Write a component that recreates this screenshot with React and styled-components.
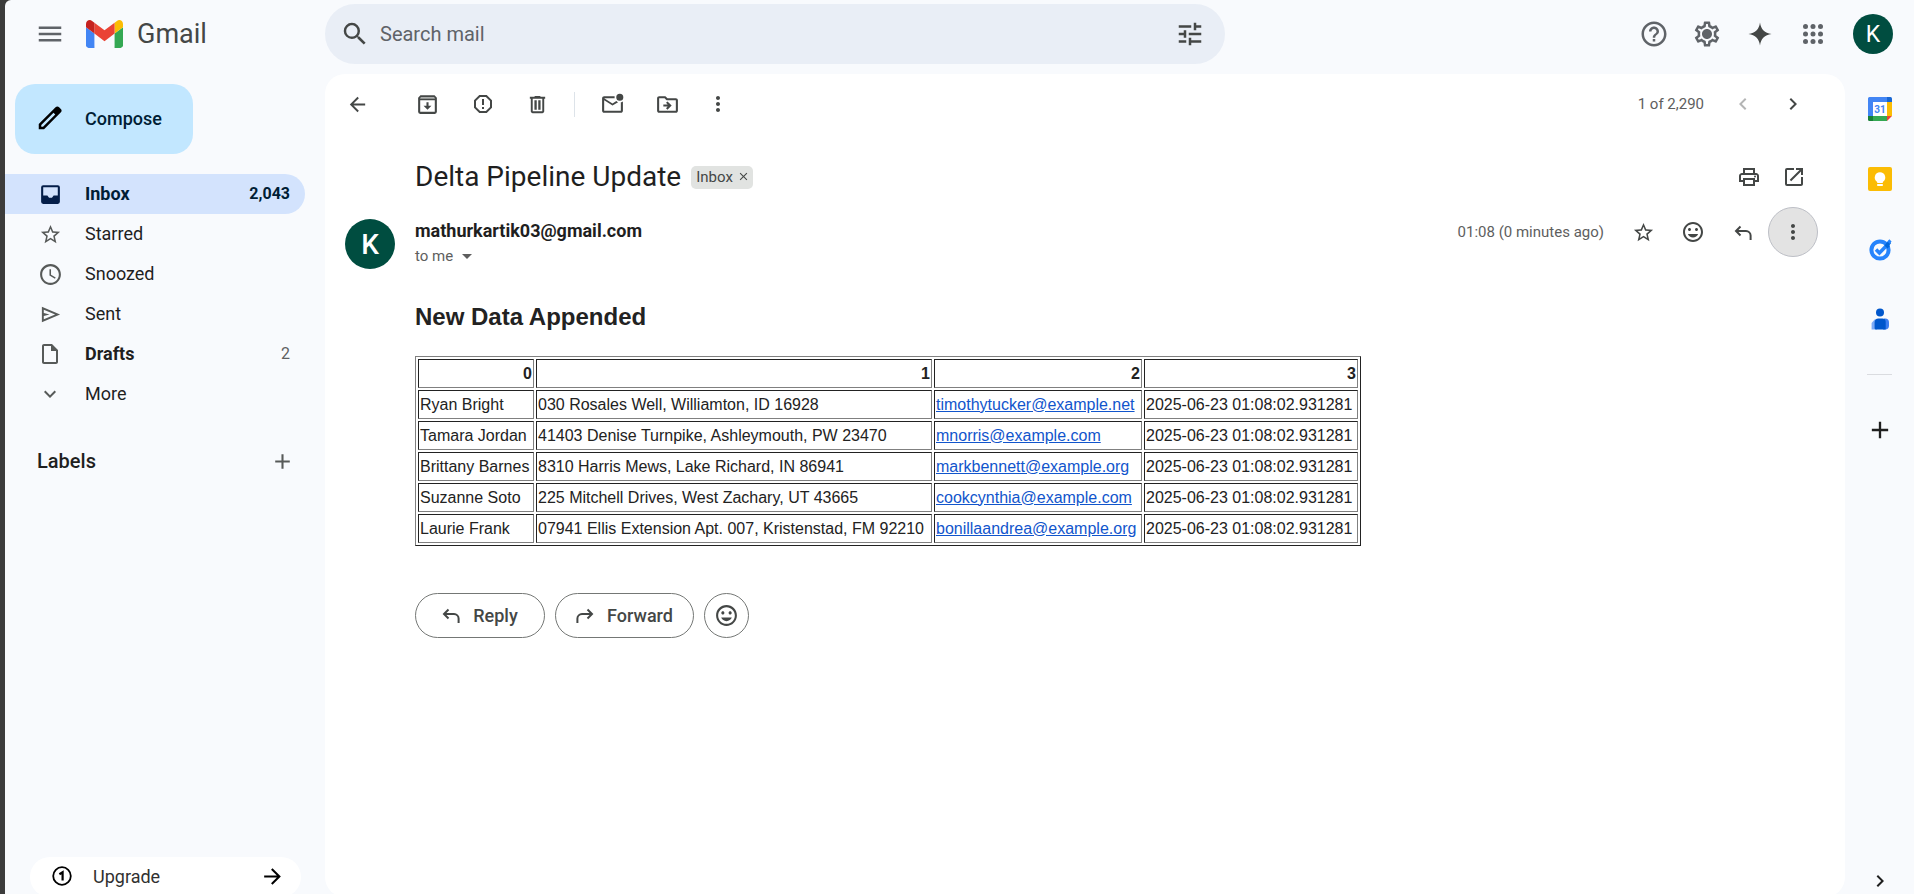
import React from "react";
import styled, { createGlobalStyle, css } from "styled-components";
import {
  MdMenu, MdSearch, MdTune, MdHelpOutline, MdOutlineSettings, MdStarBorder, MdSchedule,
  MdOutlineInsertDriveFile, MdExpandMore, MdAdd, MdArrowForward, MdArrowBack,
  MdReportGmailerrorred, MdOutlineDriveFileMove, MdMoreVert, MdChevronLeft, MdChevronRight,
  MdOutlinePrint, MdOpenInNew, MdMood, MdClose, MdArrowDropDown,
} from "react-icons/md";

const GlobalStyle = createGlobalStyle`
  *, *::before, *::after { box-sizing: border-box; }
  html, body { margin: 0; height: 100%; overflow: hidden; }
  body {
    background: #3c3c3c;
    color: #1f1f1f;
    font-family: Roboto, "Liberation Sans", sans-serif;
    font-size: 17px;
  }
  button, input { font: inherit; color: inherit; }
  svg { display: block; flex: none; }
`;

/* ---------- icons ---------- */

const Svg = styled.svg.attrs((p) => ({
  width: p.$w,
  height: p.$h || p.$w,
  "aria-hidden": true,
  fill: "currentColor",
}))``;

const GmailLogo = () => (
  <Svg $w={37} $h={28} viewBox="52 42 88 66">
    <path fill="#4285f4" d="M58 108h14V74L52 59v43c0 3.32 2.69 6 6 6" />
    <path fill="#34a853" d="M120 108h14c3.32 0 6-2.69 6-6V59l-20 15" />
    <path fill="#fbbc04" d="M120 48v26l20-15v-8c0-7.42-8.47-11.65-14.4-7.2" />
    <path fill="#ea4335" d="M72 74V48l24 18 24-18v26L96 92" />
    <path fill="#c5221f" d="M52 51v8l20 15V48l-5.6-4.2c-5.94-4.45-14.4-.22-14.4 7.2" />
  </Svg>
);

const PencilIcon = () => (
  <Svg $w={30} viewBox="0 0 24 24">
    <path
      fillRule="evenodd"
      d="M3 21v-4.25L16.45 3.3q.575-.575 1.413-.575t1.412.575l1.4 1.4q.575.575.6 1.388t-.55 1.387L7.25 21H3zM5 19h1.4L16.2 9.2l-1.4-1.4L5 17.6V19z"
    />
  </Svg>
);

const InboxIcon = () => (
  <Svg $w={25} viewBox="0 0 24 24">
    <path
      fillRule="evenodd"
      d="M5 3h14a2 2 0 0 1 2 2v14a2 2 0 0 1-2 2H5a2 2 0 0 1-2-2V5a2 2 0 0 1 2-2zm0 2v8h4l1.6 2.2h2.8L15 13h4V5H5z"
    />
  </Svg>
);

const SendIcon = () => (
  <Svg $w={23} viewBox="0 0 24 24">
    <path d="M3 20V4l19 8-19 8Zm2-3 11.85-5L5 7v3.5l6 1.5-6 1.5V17Z" />
  </Svg>
);

const OneIcon = () => (
  <Svg $w={20} viewBox="0 0 20 20">
    <circle cx="10" cy="10" r="8.8" fill="none" stroke="currentColor" strokeWidth="1.8" />
    <path d="M7.4 8.2 10.6 6.2V14.4" fill="none" stroke="currentColor" strokeWidth="2.2" />
  </Svg>
);

const GearIcon = () => (
  <Svg $w={30} viewBox="0 0 24 24">
    <MdOutlineSettings size={24} />
    <circle cx="12" cy="12" r="3.4" />
  </Svg>
);

const SparkIcon = () => (
  <Svg $w={24} viewBox="0 0 24 24">
    <path d="M12 .5C12.9 7.3 16.7 11.1 23.5 12 16.7 12.9 12.9 16.7 12 23.5 11.1 16.7 7.3 12.9 .5 12 7.3 11.1 11.1 7.3 12 .5z" />
  </Svg>
);

const AppsIcon = () => (
  <Svg $w={20} viewBox="0 0 20 20">
    {[2.5, 10, 17.5].map((y) =>
      [2.5, 10, 17.5].map((x) => <circle key={`${x}-${y}`} cx={x} cy={y} r="2.5" />)
    )}
  </Svg>
);

const ArchiveIcon = () => (
  <Svg $w={25} viewBox="0 0 24 24">
    <path
      fillRule="evenodd"
      d="M5.2 3h13.6L21 5.6V19a2 2 0 0 1-2 2H5a2 2 0 0 1-2-2V5.6L5.2 3zM5 8v11h14V8H5z"
    />
    <path d="M5.6 4.8h12.8l.8 1.6H4.8z" fill="#aaacab" />
    <path d="M11 9.8h2v3.4h2.8L12 17l-3.8-3.8H11z" />
  </Svg>
);

const TrashIcon = () => (
  <Svg $w={23} viewBox="0 0 24 24">
    <path
      fillRule="evenodd"
      d="M7 21q-.825 0-1.412-.587Q5 19.825 5 19V6H4V4h5V3h6v1h5v2h-1v13q0 .825-.587 1.413Q17.825 21 17 21ZM17 6H7v13h10ZM8.8 17.4h2.4V7.6H8.8Zm4 0h2.4V7.6h-2.4Z"
    />
  </Svg>
);

const UnreadIcon = () => (
  <Svg $w={25} viewBox="0 0 24 24">
    <path d="M4 20q-.825 0-1.412-.587Q2 18.825 2 18V6q0-.825.588-1.412Q3.175 4 4 4h10.1q-.1.5-.1 1t.1 1H4l8 5 3.65-2.275q.375.35.813.6.437.25.937.425L12 13 4 8v10h16V9.9q.575-.125 1.075-.35.5-.225.925-.55v9q0 .825-.587 1.413Q20.825 20 20 20ZM19 8.4a3.4 3.4 0 1 1 0-6.8 3.4 3.4 0 0 1 0 6.8Z" />
  </Svg>
);

const arrowPath = "M6.5 1.5 2 6l4.5 4.5M2.4 6H12a4.6 4.6 0 0 1 4.6 4.6V15";

const ReplyIcon = () => (
  <Svg $w={18} $h={15} viewBox="0 0 18 15">
    <path d={arrowPath} fill="none" stroke="currentColor" strokeWidth="2" />
  </Svg>
);

const ForwardIcon = () => (
  <Svg $w={18} $h={15} viewBox="0 0 18 15">
    <g transform="matrix(-1 0 0 1 18 0)">
      <path d={arrowPath} fill="none" stroke="currentColor" strokeWidth="2" />
    </g>
  </Svg>
);

const CalendarIcon = () => (
  <Svg $w={24} viewBox="0 0 24 24">
    <path fill="#4285f4" d="M1.5 0H19v5H5v14H0V1.5A1.5 1.5 0 0 1 1.5 0z" />
    <path fill="#1967d2" d="M19 0h3.5A1.5 1.5 0 0 1 24 1.5V5h-5z" />
    <path fill="#fbbc04" d="M19 5h5v14h-5z" />
    <path fill="#34a853" d="M5 19h14v5H5z" />
    <path fill="#188038" d="M0 19h5v5H1.5A1.5 1.5 0 0 1 0 22.5z" />
    <path fill="#ea4335" d="M19 19h5l-5 5z" />
    <path fill="#fff" d="M5 5h14v14H5z" />
    <text x="12" y="16" textAnchor="middle" fill="#4285f4" fontSize="10" fontWeight="700">31</text>
  </Svg>
);

const KeepIcon = () => (
  <Svg $w={24} viewBox="0 0 24 24">
    <rect width="24" height="24" rx="2" fill="#fbbc04" />
    <path fill="#fff" d="M12 5.3a5.2 5.2 0 0 1 2.8 9.6v1H9.2v-1A5.2 5.2 0 0 1 12 5.3zM9.2 17h5.6v1.9H9.2z" />
  </Svg>
);

const TasksIcon = () => (
  <Svg $w={24} viewBox="0 0 24 24">
    <circle cx="12" cy="13" r="8.6" fill="none" stroke="#2684fc" strokeWidth="4" />
    <path d="M8 12.6l3.4 3.4 7-7.2" fill="none" stroke="#2684fc" strokeWidth="3.6" />
    <path d="M16.4 8.4l3.2 3.2 2.2-2.5-3-3z" fill="#0066da" />
    <path d="M17.6 7.2l2.9-3.6 2.6 2.4-2.6 3.4z" fill="#0066da" />
    <path d="M19.4 4.6 21.3 2.3 23.6 4.6 21.6 6.8z" fill="#2684fc" />
  </Svg>
);

const ContactsIcon = () => (
  <Svg $w={24} viewBox="0 0 24 24">
    <circle cx="12" cy="5.6" r="4" fill="#0057cc" />
    <path fill="#7baaf7" d="M6.6 12.4H9v10H3.6V16z" />
    <path fill="#3d7ff0" d="M16 11.4h1a4 4 0 0 1 4 4v3.2a4 4 0 0 1-4 4h-2z" />
    <path fill="#0057cc" d="M10.5 11.4h3.8a3.4 3.4 0 0 1 3.4 3.4v7.8H8a1.4 1.4 0 0 1-1.4-1.4v-6a3.9 3.9 0 0 1 3.9-3.8z" />
  </Svg>
);

/* ---------- page frame ---------- */

const Shell = styled.div`
  display: flex;
  flex-direction: column;
  height: calc(100vh + 3px);
  margin-left: 5px;
  background: #f8fafd;
  border-top-left-radius: 6px;
`;

const Header = styled.header`
  display: flex;
  flex: none;
  height: 74px;
  padding: 4px 21px 10px 0;
`;

const Body = styled.div`
  display: flex;
  flex: 1;
  min-height: 0;
`;

const IconButton = styled.button`
  display: flex;
  align-items: center;
  justify-content: center;
  flex: none;
  width: ${(p) => p.$w || 50}px;
  height: 50px;
  padding: 0;
  border: 1px solid ${(p) => (p.$active ? "#bdbfc6" : "transparent")};
  border-radius: 50%;
  background: ${(p) => (p.$active ? "#e3e3e3" : "none")};
  color: ${(p) => p.$color || "#444746"};
`;

const Avatar = styled.span`
  display: flex;
  align-items: center;
  justify-content: center;
  flex: none;
  width: ${(p) => p.$size}px;
  height: ${(p) => p.$size}px;
  border-radius: 50%;
  background: #004d40;
  color: #fff;
  font-size: ${(p) => (p.$size > 40 ? 28 : 23)}px;
  font-weight: ${(p) => (p.$size > 40 ? 500 : 400)};
`;

const AccountButton = styled.button`
  padding: 0;
  margin-left: 12px;
  border: 0;
  background: none;
  border-radius: 50%;
`;

/* ---------- header ---------- */

const Brand = styled.div`
  display: flex;
  align-items: center;
  flex: none;
  width: 320px;
  padding-left: 20px;
`;

const BrandLink = styled.a`
  display: flex;
  align-items: center;
  gap: 14px;
  margin-left: 11px;
  color: #444746;
  font-size: 27px;
  text-decoration: none;
`;

const SearchBar = styled.form`
  display: flex;
  align-items: center;
  flex: 0 1 900px;
  padding: 0 10px 0 5px;
  border-radius: 30px;
  background: #e9eef6;
`;

const SearchInput = styled.input`
  flex: 1;
  min-width: 0;
  padding: 0;
  border: 0;
  outline: 0;
  background: none;
  font-size: 20px;
  &::placeholder { color: #5f6368; opacity: 1; }
`;

const HeaderTools = styled.div`
  display: flex;
  align-items: center;
  gap: 3px;
  margin-left: auto;
`;

/* ---------- sidebar ---------- */

const Sidebar = styled.nav`
  display: flex;
  flex-direction: column;
  align-items: flex-start;
  flex: none;
  width: 320px;
  padding-right: 20px;
`;

const ComposeButton = styled.button`
  display: flex;
  align-items: center;
  gap: 20px;
  height: 70px;
  margin: 10px 0 20px 10px;
  padding: 0 31px 2px 20px;
  border: 0;
  border-radius: 20px;
  background: #c2e7ff;
  color: #001d35;
  font-size: 18px;
  font-weight: 500;
  svg { color: #000; }
`;

const FolderList = styled.ul`
  width: 100%;
  margin: 0;
  padding: 0;
  list-style: none;
`;

const FolderLink = styled.a`
  display: flex;
  align-items: center;
  height: 40px;
  padding: 0 15px 2px 0;
  border-radius: 0 20px 20px 0;
  color: #1f1f1f;
  font-size: 18px;
  text-decoration: none;
  ${(p) => p.$bold && css`font-weight: 700;`}
  ${(p) => p.$selected && css`background: #d3e3fd; color: #001d35; font-weight: 700;`}
`;

const FolderIcon = styled.span`
  display: flex;
  justify-content: center;
  width: 50px;
  margin: 0 10px 0 20px;
  padding-top: 2px;
  color: ${(p) => (p.$selected ? "#041e49" : "#575a59")};
`;

const FolderCount = styled.span`
  margin-left: auto;
  color: ${(p) => (p.$selected ? "#001d35" : "#5e5f61")};
  font-size: 16px;
  font-weight: ${(p) => (p.$selected ? 700 : 400)};
`;

const LabelsHead = styled.div`
  display: flex;
  align-items: center;
  justify-content: space-between;
  width: 100%;
  margin-top: 22px;
  padding: 0 0 0 32px;
  svg { color: #575a59; }
`;

const LabelsTitle = styled.h2`
  margin: 0;
  font-size: 20px;
  font-weight: 500;
`;

const UpgradeLink = styled.a`
  display: flex;
  align-items: center;
  gap: 21px;
  width: 271px;
  height: 40px;
  margin: auto 0 0 25px;
  padding: 0 16px 2px 22px;
  border-radius: 20px;
  background: #fff;
  color: #303030;
  font-size: 18px;
  text-decoration: none;
  svg { color: #000; }
  svg:last-child { margin-left: auto; }
`;

/* ---------- message ---------- */

const Panel = styled.main`
  flex: 1;
  min-width: 0;
  border-radius: 20px;
  background: #fff;
`;

const Toolbar = styled.div`
  display: flex;
  align-items: center;
  height: 62px;
  padding: 0 27px 2px 5px;
`;

const ToolGroup = styled.div`
  display: flex;
  align-items: center;
  margin-left: ${(p) => p.$gap || 0}px;
`;

const Divider = styled.span`
  width: 1px;
  height: 25px;
  margin: 0 10px 0 9px;
  background: #dde3e9;
`;

const Pager = styled.div`
  display: flex;
  align-items: center;
  margin-left: auto;
  color: #5e5e5e;
  font-size: 15px;
`;

const PagerText = styled.span`
  margin-right: 14px;
`;

const SubjectRow = styled.div`
  display: flex;
  align-items: center;
  height: 50px;
  margin: 16px 0 5px;
  padding: 0 29px 0 90px;
`;

const Subject = styled.h1`
  margin: 0 10px 0 0;
  font-size: 28px;
  font-weight: 400;
  line-height: 36px;
`;

const Chip = styled.button`
  display: flex;
  align-items: center;
  gap: 4px;
  height: 23px;
  padding: 0 3px 1px 5px;
  border: 0;
  border-radius: 5px;
  background: #e1e3e1;
  color: #444746;
  font-size: 15px;
`;

const SubjectTools = styled.div`
  display: flex;
  margin-left: auto;
`;

const MessageHead = styled.div`
  display: flex;
  align-items: flex-start;
  gap: 20px;
  padding: 0 27px 0 20px;
`;

const AvatarSlot = styled.div`
  padding-top: 12px;
`;

const SenderBlock = styled.div`
  padding-top: 12px;
`;

const SenderName = styled.h3`
  margin: 0;
  font-size: 18px;
  font-weight: 700;
  line-height: 24px;
`;

const Recipient = styled.button`
  display: flex;
  align-items: center;
  gap: 2px;
  height: 26px;
  padding: 0;
  border: 0;
  background: none;
  color: #5e5e5e;
  font-size: 15px;
`;

const MessageMeta = styled.div`
  display: flex;
  align-items: center;
  margin-left: auto;
  color: #5e5e5e;
  font-size: 15px;
`;

const MessageTime = styled.time`
  margin-right: 14px;
`;

const Content = styled.article`
  padding: 34px 90px 0;
  color: #222;
  font-family: "Liberation Sans", Arial, sans-serif;
  font-size: 16px;
`;

const ContentTitle = styled.h2`
  margin: 0 0 25px;
  font-size: 24px;
  font-weight: 700;
  line-height: 28px;
`;

const DataTable = styled.table`
  table-layout: fixed;
  width: 946px;
  border: 1px solid;
  border-color: #808080 #222 #222 #808080;
  border-collapse: separate;
  border-spacing: 2px;
  th, td {
    height: 29px;
    padding: 1px;
    border: 1px solid;
    border-color: #222 #808080 #808080 #222;
    white-space: nowrap;
  }
  th { text-align: right; }
  a { color: #1155cc; }
`;

const Column = styled.col`
  width: ${(p) => p.$w}px;
`;

const Actions = styled.div`
  display: flex;
  gap: 10px;
  margin: 47px 0 0 90px;
`;

const ActionButton = styled.button`
  display: flex;
  align-items: center;
  justify-content: center;
  gap: 13px;
  width: ${(p) => p.$w}px;
  height: 45px;
  padding: 0;
  border: 1px solid #747775;
  border-radius: 23px;
  background: #fff;
  color: #444746;
  font-size: 18px;
  font-weight: 500;
`;

/* ---------- side rail ---------- */

const Rail = styled.aside`
  display: flex;
  flex-direction: column;
  align-items: center;
  flex: none;
  width: 69px;
`;

const RailButton = styled.button`
  display: flex;
  align-items: center;
  justify-content: center;
  flex: none;
  width: 50px;
  height: ${(p) => p.$h || 70}px;
  margin-top: ${(p) => p.$top || "0"};
  padding: 0;
  border: 0;
  background: none;
  color: #1f1f1f;
`;

const RailDivider = styled.hr`
  width: 25px;
  height: 1px;
  margin: 20px 0 0;
  border: 0;
  background: #dadce0;
`;

/* ---------- data ---------- */

const folders = [
  { name: "Inbox", icon: <InboxIcon />, count: "2,043", selected: true },
  { name: "Starred", icon: <MdStarBorder size={23} /> },
  { name: "Snoozed", icon: <MdSchedule size={25} /> },
  { name: "Sent", icon: <SendIcon /> },
  { name: "Drafts", icon: <MdOutlineInsertDriveFile size={24} />, count: "2", bold: true },
  { name: "More", icon: <MdExpandMore size={24} /> },
];

const stamp = "2025-06-23 01:08:02.931281";
const rows = [
  ["Ryan Bright", "030 Rosales Well, Williamton, ID 16928", "timothytucker@example.net"],
  ["Tamara Jordan", "41403 Denise Turnpike, Ashleymouth, PW 23470", "mnorris@example.com"],
  ["Brittany Barnes", "8310 Harris Mews, Lake Richard, IN 86941", "markbennett@example.org"],
  ["Suzanne Soto", "225 Mitchell Drives, West Zachary, UT 43665", "cookcynthia@example.com"],
  ["Laurie Frank", "07941 Ellis Extension Apt. 007, Kristenstad, FM 92210", "bonillaandrea@example.org"],
];

const railApps = [
  ["Calendar", <CalendarIcon />],
  ["Keep", <KeepIcon />],
  ["Tasks", <TasksIcon />],
  ["Contacts", <ContactsIcon />],
];

/* ---------- sections ---------- */

const TopBar = () => (
  <Header>
    <Brand>
      <IconButton aria-label="Main menu" $color="#5f6368"><MdMenu size={30} /></IconButton>
      <BrandLink href="#inbox"><GmailLogo />Gmail</BrandLink>
    </Brand>
    <SearchBar role="search">
      <IconButton type="button" aria-label="Search"><MdSearch size={30} /></IconButton>
      <SearchInput type="text" placeholder="Search mail" aria-label="Search mail" />
      <IconButton type="button" aria-label="Show search options"><MdTune size={30} /></IconButton>
    </SearchBar>
    <HeaderTools>
      <IconButton aria-label="Support" $color="#5f6368"><MdHelpOutline size={30} /></IconButton>
      <IconButton aria-label="Settings" $color="#5f6368"><GearIcon /></IconButton>
      <IconButton aria-label="Ask Gemini"><SparkIcon /></IconButton>
      <IconButton aria-label="Google apps" $color="#5f6368"><AppsIcon /></IconButton>
      <AccountButton aria-label="Account"><Avatar $size={40}>K</Avatar></AccountButton>
    </HeaderTools>
  </Header>
);

const SideNav = () => (
  <Sidebar>
    <ComposeButton><PencilIcon />Compose</ComposeButton>
    <FolderList>
      {folders.map((f) => (
        <li key={f.name}>
          <FolderLink href={`#${f.name.toLowerCase()}`} $selected={f.selected} $bold={f.bold}>
            <FolderIcon $selected={f.selected}>{f.icon}</FolderIcon>
            {f.name}
            {f.count && <FolderCount $selected={f.selected}>{f.count}</FolderCount>}
          </FolderLink>
        </li>
      ))}
    </FolderList>
    <LabelsHead>
      <LabelsTitle>Labels</LabelsTitle>
      <IconButton aria-label="Create new label" $w={45}><MdAdd size={25} /></IconButton>
    </LabelsHead>
    <UpgradeLink href="#upgrade"><OneIcon />Upgrade<MdArrowForward size={25} /></UpgradeLink>
  </Sidebar>
);

const MessageToolbar = () => (
  <Toolbar>
    <IconButton $w={55} aria-label="Back to Inbox"><MdArrowBack size={23} /></IconButton>
    <ToolGroup $gap={15}>
      <IconButton $w={55} aria-label="Archive"><ArchiveIcon /></IconButton>
      <IconButton $w={55} aria-label="Report spam"><MdReportGmailerrorred size={24} /></IconButton>
      <IconButton $w={55} aria-label="Delete"><TrashIcon /></IconButton>
    </ToolGroup>
    <Divider />
    <ToolGroup>
      <IconButton $w={55} aria-label="Mark as unread"><UnreadIcon /></IconButton>
      <IconButton $w={55} aria-label="Move to"><MdOutlineDriveFileMove size={25} /></IconButton>
      <IconButton $w={45} aria-label="More"><MdMoreVert size={24} /></IconButton>
    </ToolGroup>
    <Pager>
      <PagerText>1 of 2,290</PagerText>
      <IconButton aria-label="Newer" $color="#b4b5b5"><MdChevronLeft size={24} /></IconButton>
      <IconButton aria-label="Older"><MdChevronRight size={24} /></IconButton>
    </Pager>
  </Toolbar>
);

const DataGrid = () => (
  <DataTable>
    <colgroup>
      <Column $w={116} />
      <Column $w={396} />
      <Column $w={208} />
      <Column $w={214} />
    </colgroup>
    <thead>
      <tr>{["0", "1", "2", "3"].map((h) => <th key={h} scope="col">{h}</th>)}</tr>
    </thead>
    <tbody>
      {rows.map(([name, address, email]) => (
        <tr key={name}>
          <td>{name}</td>
          <td>{address}</td>
          <td><a href={`mailto:${email}`}>{email}</a></td>
          <td>{stamp}</td>
        </tr>
      ))}
    </tbody>
  </DataTable>
);

const MessageView = () => (
  <Panel>
    <MessageToolbar />
    <SubjectRow>
      <Subject>Delta Pipeline Update</Subject>
      <Chip aria-label="Remove label Inbox">Inbox<MdClose size={13} /></Chip>
      <SubjectTools>
        <IconButton $w={45} aria-label="Print"><MdOutlinePrint size={24} /></IconButton>
        <IconButton $w={45} aria-label="Open in new window"><MdOpenInNew size={24} /></IconButton>
      </SubjectTools>
    </SubjectRow>
    <MessageHead>
      <AvatarSlot><Avatar $size={50}>K</Avatar></AvatarSlot>
      <SenderBlock>
        <SenderName>mathurkartik03@gmail.com</SenderName>
        <Recipient>to me<MdArrowDropDown size={24} /></Recipient>
      </SenderBlock>
      <MessageMeta>
        <MessageTime>01:08 (0 minutes ago)</MessageTime>
        <IconButton aria-label="Star"><MdStarBorder size={23} /></IconButton>
        <IconButton aria-label="Add reaction"><MdMood size={24} /></IconButton>
        <IconButton aria-label="Reply"><ReplyIcon /></IconButton>
        <IconButton aria-label="More options" $active><MdMoreVert size={24} /></IconButton>
      </MessageMeta>
    </MessageHead>
    <Content>
      <ContentTitle>New Data Appended</ContentTitle>
      <DataGrid />
    </Content>
    <Actions>
      <ActionButton $w={130}><ReplyIcon />Reply</ActionButton>
      <ActionButton $w={139}><ForwardIcon />Forward</ActionButton>
      <ActionButton $w={45} aria-label="Add reaction"><MdMood size={25} /></ActionButton>
    </Actions>
  </Panel>
);

const SideRail = () => (
  <Rail>
    {railApps.map(([name, icon]) => (
      <RailButton key={name} aria-label={name}>{icon}</RailButton>
    ))}
    <RailDivider />
    <RailButton $h={50} $top="30px" aria-label="Get add-ons"><MdAdd size={28} /></RailButton>
    <RailButton $h={32} $top="auto" aria-label="Hide side panel"><MdChevronRight size={24} /></RailButton>
  </Rail>
);

export default function App() {
  return (
    <>
      <GlobalStyle />
      <Shell>
        <TopBar />
        <Body>
          <SideNav />
          <MessageView />
          <SideRail />
        </Body>
      </Shell>
    </>
  );
}
